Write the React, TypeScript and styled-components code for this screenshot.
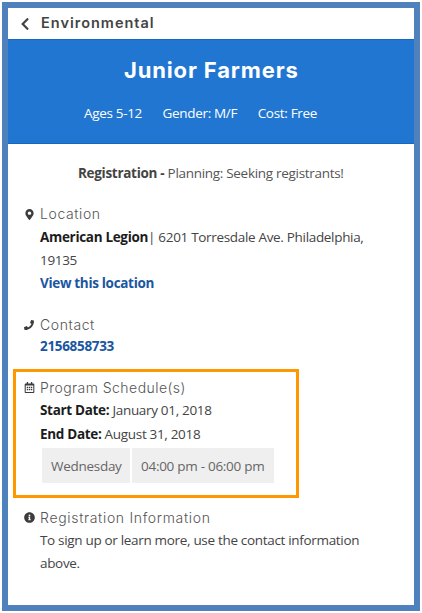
import React from 'react';
import styled, { createGlobalStyle } from 'styled-components';
import { FaChevronLeft, FaMapMarkerAlt, FaPhone, FaRegCalendarAlt, FaInfoCircle } from 'react-icons/fa';

const GlobalStyle = createGlobalStyle`
  *, *::before, *::after { box-sizing: border-box; }
  body { margin: 0; background: #fff; }
`;

const Frame = styled.main`
  width: 418px;
  height: 609px;
  margin: 2px;
  border: 6px solid #4f81bd;
  background: #fff;
  color: #444;
  font-family: 'Open Sans', sans-serif;
  font-size: 13.5px;
  letter-spacing: -0.32px;
  overflow: hidden;
`;

const TopBar = styled.header`
  display: flex;
  align-items: center;
  height: 31px;
  padding-left: 12px;
  color: #444;
  svg { width: 10px; height: 14px; margin: 1px 11px 0 0; }
`;

const Category = styled.span`
  font: 600 14.5px/30px Inter, sans-serif;
  letter-spacing: 1px;
  margin-top: -1px;
`;

const Banner = styled.section`
  height: 105px;
  padding-top: 16px;
  background: #2176d2;
  border-top: 1px solid #1767bd;
  border-bottom: 1px solid #1767bd;
  color: #fff;
`;

const Title = styled.h1`
  margin: 0 0 15px;
  padding-left: 116px;
  font: 700 22px/28px Inter, sans-serif;
  letter-spacing: 0.85px;
  white-space: nowrap;
`;

const Facts = styled.div`
  display: flex;
  gap: 20.5px;
  padding-left: 76px;
  line-height: 28px;
  white-space: nowrap;
`;

const Status = styled.p`
  margin: 17px 0 18px;
  padding-left: 70px;
  line-height: 24px;
  letter-spacing: -0.3px;
  color: #555;
  white-space: nowrap;
  b { color: #444; }
`;

const Section = styled.section<{ $gap: number }>`
  display: grid;
  grid-template-columns: 16px 1fr;
  padding-left: 16px;
  margin-bottom: ${(p) => p.$gap}px;
`;

const IconCell = styled.span<{ $size: number }>`
  display: flex;
  align-items: center;
  justify-content: center;
  width: 10px;
  height: 22px;
  color: #3c3c3c;
  svg { flex: none; width: ${(p) => p.$size}px; height: ${(p) => p.$size}px; }
`;

const Heading = styled.h2<{ $spacing?: number }>`
  margin: 0;
  font: 300 14px/22px Inter, sans-serif;
  letter-spacing: ${(p) => p.$spacing ?? 0.6}px;
  color: #555;
`;

const Body = styled.div`
  grid-column: 2;
`;

const Line = styled.div<{ $height?: number }>`
  height: ${(p) => p.$height ?? 24}px;
  line-height: ${(p) => p.$height ?? 24}px;
  white-space: nowrap;
  b { color: #1c1c1c; }
`;

const Link = styled.a`
  color: #1a56a0;
  font-weight: 700;
  text-decoration: none;
`;

const Highlight = styled.div`
  width: 286px;
  height: 129px;
  margin: 0 0 9px 5px;
  padding-top: 5px;
  border: 3px solid #ff9800;
  ${Section} { padding-left: 8px; }
`;

const Schedule = styled.div`
  display: grid;
  grid-template-columns: 88px 142px;
  gap: 2px;
  margin: 2px 0 0 2px;
`;

const Slot = styled.span`
  height: 35px;
  padding-left: 9px;
  background: #efefef;
  color: #666;
  line-height: 36px;
  letter-spacing: -0.28px;
  white-space: nowrap;
`;

export default function App() {
  return (
    <>
      <GlobalStyle />
      <Frame>
        <TopBar>
          <FaChevronLeft />
          <Category>Environmental</Category>
        </TopBar>
        <Banner>
          <Title>Junior Farmers</Title>
          <Facts>
            <span>Ages 5-12</span>
            <span>Gender: M/F</span>
            <span>Cost: Free</span>
          </Facts>
        </Banner>
        <Status><b>Registration -</b> Planning: Seeking registrants!</Status>

        <Section $gap={20}>
          <IconCell $size={11}><FaMapMarkerAlt /></IconCell>
          <Heading>Location</Heading>
          <Body>
            <Line>
              <b>American Legion</b>| 6201 Torresdale Ave. Philadelphia,
            </Line>
            <Line $height={22.5}>19135</Line>
            <Line $height={22}><Link>View this location</Link></Line>
          </Body>
        </Section>

        <Section $gap={12}>
          <IconCell $size={10}><FaPhone /></IconCell>
          <Heading>Contact</Heading>
          <Body><Line $height={21}><Link>2156858733</Link></Line></Body>
        </Section>

        <Highlight>
          <Section $gap={0}>
            <IconCell $size={11}><FaRegCalendarAlt /></IconCell>
            <Heading $spacing={0.45}>Program Schedule(s)</Heading>
            <Body>
              <Line $height={23}><b>Start Date:</b> January 01, 2018</Line>
              <Line><b>End Date:</b> August 31, 2018</Line>
              <Schedule>
                <Slot>Wednesday</Slot>
                <Slot>04:00 pm - 06:00 pm</Slot>
              </Schedule>
            </Body>
          </Section>
        </Highlight>

        <Section $gap={0}>
          <IconCell $size={11}><FaInfoCircle /></IconCell>
          <Heading $spacing={0.68}>Registration Information</Heading>
          <Body>
            <Line $height={22.5}>To sign up or learn more, use the contact information</Line>
            <Line>above.</Line>
          </Body>
        </Section>
      </Frame>
    </>
  );
}
